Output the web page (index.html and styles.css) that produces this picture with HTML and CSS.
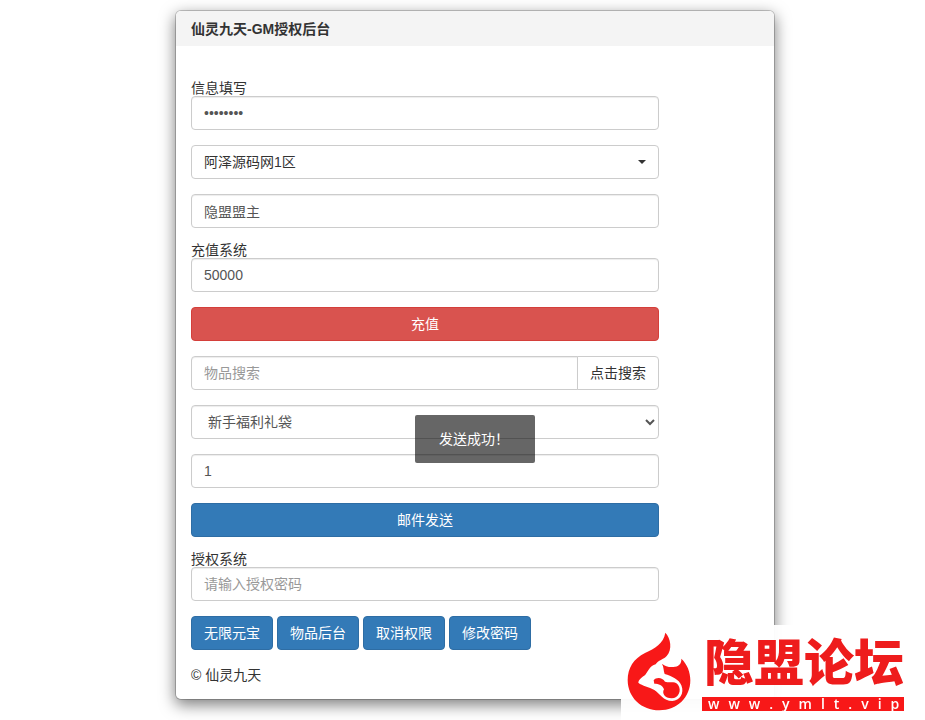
FILE: index.html
```
<!DOCTYPE html>
<html lang="zh-CN">
<head>
  <meta charset="UTF-8">
  <meta name="viewport" content="width=device-width, initial-scale=1">
  <title>仙灵九天-GM授权后台</title>
  <link rel="stylesheet" href="styles.css">
</head>
<body>
  <div class="panel">
    <h1 class="panel-title">仙灵九天-GM授权后台</h1>

    <form class="panel-body">
      <div class="form-group">
        <label for="pwd">信息填写</label>
        <input type="password" id="pwd" class="form-control" value="12345678" autocomplete="off">
      </div>
      <div class="form-group picker">
        <select id="zone" class="form-control" aria-label="选择区服">
          <option>阿泽源码网1区</option>
        </select>
      </div>
      <div class="form-group">
        <input type="text" id="role" class="form-control" value="隐盟盟主" aria-label="角色名">
      </div>

      <div class="form-group">
        <label for="amount">充值系统</label>
        <input type="text" id="amount" class="form-control" value="50000">
      </div>
      <button type="button" class="btn btn-danger btn-block">充值</button>

      <div class="form-group input-group">
        <input type="text" id="search" class="form-control" placeholder="物品搜索" aria-label="物品搜索">
        <button type="button" class="btn btn-default">点击搜索</button>
      </div>
      <div class="form-group">
        <select id="item" class="form-control" aria-label="选择物品">
          <option>新手福利礼袋</option>
        </select>
      </div>
      <div class="form-group">
        <input type="text" id="num" class="form-control" value="1" aria-label="数量">
      </div>
      <button type="button" class="btn btn-primary btn-block">邮件发送</button>

      <div class="form-group">
        <label for="auth">授权系统</label>
        <input type="text" id="auth" class="form-control" placeholder="请输入授权密码">
      </div>
      <div class="btn-row">
        <button type="button" class="btn btn-primary">无限元宝</button>
        <button type="button" class="btn btn-primary">物品后台</button>
        <button type="button" class="btn btn-primary">取消权限</button>
        <button type="button" class="btn btn-primary">修改密码</button>
      </div>
      <p class="copyright">© 仙灵九天</p>
    </form>

    <div class="toast" role="status">发送成功！</div>
  </div>

  <div class="watermark">
    <svg class="flame" viewBox="8 8 192 237" aria-hidden="true">
      <path d="M123 10C117 44 92 56 62 71C28 88 10 116 10 152C10 205 52 243 105 243C159 243 198 204 198 153C198 127 188 104 171 88C172 104 162 112 147 113C132 114 122 110 113 103C119 114 117 124 121 134C142 140 164 150 171 168C181 192 166 215 144 215C116 215 107 193 90 182C74 172 54 170 42 160C42 151 54 143 63 136C72 126 76 110 94 105C101 93 118 90 127 80C145 60 139 27 123 10Z"/>
      <path d="M88 153C95 143 114 143 122 157C136 162 150 154 161 166C173 183 163 206 142 207C121 207 112 192 119 180C115 168 103 163 90 163Z"/>
    </svg>
    <div class="brand">
      <div class="brand-name">隐盟论坛</div>
      <div class="brand-url">www.ymlt.vip</div>
    </div>
  </div>
</body>
</html>
```
FILE: styles.css
```
* {
  box-sizing: border-box;
}

body {
  margin: 0;
  padding: 10px 0 20px 25px;
  background: #fff;
  color: #333;
  font-family: "Liberation Sans", "Noto Sans CJK SC", sans-serif;
  font-size: 14px;
  line-height: 20px;
}

.panel {
  position: relative;
  max-width: 600px;
  margin: 0 auto;
  background: #fff;
  background-clip: padding-box;
  border: 1px solid rgba(0,0,0,.2);
  border-radius: 6px;
  box-shadow: 0 5px 15px rgba(0,0,0,.5);
}

.panel-title {
  margin: 0;
  padding: 8px 15px 7px;
  background: #f4f4f4;
  border-radius: 5px 5px 0 0;
  font-size: 14px;
  font-weight: bold;
}

.panel-body {
  max-width: 498px;
  padding: 35px 15px 14px;
}

.form-group {
  margin-bottom: 15px;
}

label {
  display: block;
  line-height: 15px;
}

.form-control {
  display: block;
  width: 100%;
  height: 34px;
  padding: 6px 12px;
  border: 1px solid #ccc;
  border-radius: 4px;
  background: #fff;
  box-shadow: inset 0 1px 1px rgba(0,0,0,.075);
  color: #555;
  font: inherit;
}

.form-control::placeholder {
  color: #999;
}

.picker {
  position: relative;
}

.picker .form-control {
  appearance: none;
  box-shadow: none;
  color: #333;
}

.picker::after {
  content: "";
  position: absolute;
  top: 15px;
  right: 13px;
  border-top: 4px solid #333;
  border-left: 4px solid transparent;
  border-right: 4px solid transparent;
  pointer-events: none;
}

.btn {
  height: 34px;
  padding: 6px 12px;
  border: 1px solid transparent;
  border-radius: 4px;
  font: inherit;
  white-space: nowrap;
  cursor: pointer;
}

.btn-block {
  display: block;
  width: 100%;
  margin-bottom: 15px;
}

.btn-default {
  background: #fff;
  border-color: #ccc;
  color: #333;
}

.btn-primary {
  background: #337ab7;
  border-color: #2e6da4;
  color: #fff;
}

.btn-danger {
  background: #d9534f;
  border-color: #d43f3a;
  color: #fff;
}

.input-group {
  display: flex;
}

.input-group .form-control {
  flex: 1;
  min-width: 0;
  border-radius: 4px 0 0 4px;
}

.input-group .btn {
  margin-left: -1px;
  border-radius: 0 4px 4px 0;
}

.btn-row {
  display: flex;
  flex-wrap: wrap;
  gap: 4px;
  margin-bottom: 15px;
}

.copyright {
  margin: 0;
}

.toast {
  position: absolute;
  top: 404px;
  left: 50%;
  width: 120px;
  padding: 14px 24px;
  transform: translateX(-50%);
  background: rgba(0,0,0,.6);
  border-radius: 2px;
  color: #fff;
  white-space: nowrap;
}

.watermark {
  position: fixed;
  right: 0;
  bottom: 0;
  display: flex;
  align-items: flex-end;
  gap: 11px;
  padding: 7px 21px 9px 6px;
  background: rgba(255,255,255,.96);
}

.flame {
  width: 64px;
  height: 79px;
  fill: #f81818;
}

.brand {
  width: 202px;
}

.brand-name {
  color: #ee1c1c;
  font-family: "Liberation Serif", "Noto Sans CJK SC", serif;
  font-size: 50px;
  font-weight: 900;
  line-height: 60px;
  text-align: right;
}

.brand-url {
  margin-top: 3px;
  padding-left: 6px;
  background: #f81818;
  color: #fff;
  font-family: "Open Sans", sans-serif;
  font-size: 14px;
  font-weight: 600;
  line-height: 14px;
  letter-spacing: 9px;
  white-space: nowrap;
}
```
